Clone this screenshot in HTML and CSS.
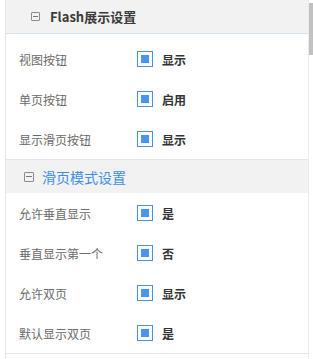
FILE: index.html
```html
<!DOCTYPE html>
<html lang="zh-CN">
<head>
<meta charset="utf-8">
<title>设置</title>
<link rel="stylesheet" href="styles.css">
</head>
<body>
<div class="panel">
  <section class="group group-first">
    <div class="group-head head-main">
      <span class="toggle"></span>
      <span class="title">Flash展示设置</span>
    </div>
    <div class="rows rows-first">
      <div class="row"><span class="label">视图按钮</span><span class="check"></span><span class="value">显示</span></div>
      <div class="row"><span class="label">单页按钮</span><span class="check"></span><span class="value">启用</span></div>
      <div class="row"><span class="label">显示滑页按钮</span><span class="check"></span><span class="value">显示</span></div>
    </div>
  </section>
  <section class="group">
    <div class="group-head head-sub">
      <span class="toggle"></span>
      <span class="title title-blue">滑页模式设置</span>
    </div>
    <div class="rows">
      <div class="row"><span class="label">允许垂直显示</span><span class="check"></span><span class="value">是</span></div>
      <div class="row"><span class="label">垂直显示第一个</span><span class="check"></span><span class="value">否</span></div>
      <div class="row"><span class="label">允许双页</span><span class="check"></span><span class="value">显示</span></div>
      <div class="row"><span class="label">默认显示双页</span><span class="check"></span><span class="value">是</span></div>
    </div>
  </section>
</div>
<div class="scroll-thumb"></div>
</body>
</html>
```

FILE: styles.css
```css
html, body {
  margin: 0;
  padding: 0;
  background: #ffffff;
  overflow: hidden;
}
body {
  font-family: "Noto Sans CJK SC", "Noto Sans", sans-serif;
  width: 313px;
  height: 359px;
}
.panel {
  margin-left: 5px;
  width: 302px;
  min-height: 359px;
  border-left: 1px solid #e2e7ea;
  border-right: 1px solid #e9ecee;
}
.group {
  border-bottom: 1px solid #e3e6e8;
}
.group-head {
  height: 33px;
  display: flex;
  align-items: center;
  background: #f2f2f2;
}
.head-main {
  padding-left: 25px;
  border-bottom: 1px solid #d9e2ea;
}
.head-sub {
  padding-left: 18px;
}
.toggle {
  position: relative;
  width: 9px;
  height: 9px;
  border: 1px solid #8c8c8c;
  box-sizing: border-box;
  border-radius: 1px;
  flex: none;
}
.toggle::after {
  content: "";
  position: absolute;
  left: 1px;
  right: 1px;
  top: 3px;
  height: 1px;
  background: #777;
}
.head-main .toggle { margin-right: 10px; }
.head-sub .toggle { margin-right: 8px; width: 10px; height: 10px; }
.head-sub .toggle::after { top: 3.5px; }
.title {
  font-size: 13px;
  font-weight: bold;
  color: #3a3a3a;
  line-height: 1;
}
.title-blue {
  font-size: 14px;
  font-weight: normal;
  color: #3f8fe6;
}
.rows-first {
  padding-top: 5px;
}
.row {
  height: 40px;
  display: flex;
  align-items: center;
  padding-left: 13px;
}
.label {
  width: 118px;
  font-size: 12px;
  color: #6b6b6b;
}
.check {
  width: 16px;
  height: 16px;
  box-sizing: border-box;
  border: 1px solid #4a8fe0;
  padding: 3px;
  background: #fff;
  flex: none;
  display: flex;
}
.check::before {
  content: "";
  flex: 1;
  background: #4896ec;
}
.value {
  margin-left: 9px;
  font-size: 12px;
  font-weight: bold;
  color: #333;
}
.scroll-thumb {
  position: absolute;
  top: 3px;
  left: 309px;
  width: 4px;
  height: 52px;
  background: #c1c1c1;
}
```
